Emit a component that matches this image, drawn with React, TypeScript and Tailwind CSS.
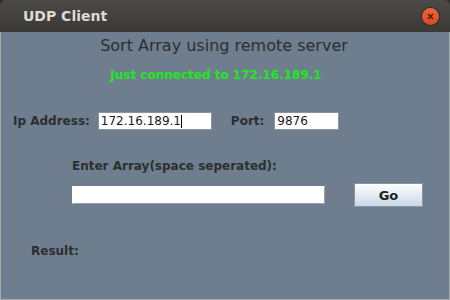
export default function App() {
  const sans = { fontFamily: '"DejaVu Sans", sans-serif' };
  return (
    <div className="w-[450px] h-[300px] bg-[#2f2e2b] overflow-hidden" style={sans}>
      <div className="flex flex-col w-full h-full">
        {/* title bar */}
        <div className="h-[32px] shrink-0 flex items-center justify-between rounded-t-[6px] bg-gradient-to-b from-[#4b4a46] to-[#3a3935] pl-[23px] pr-[11px]">
          <span className="text-[14px] font-bold text-[#dfdbd2] leading-none">UDP Client</span>
          <span className="w-[17px] h-[17px] rounded-full bg-gradient-to-b from-[#f0673a] to-[#d24a1f] flex items-center justify-center shadow-[0_0_0_1px_#2a2926]">
            <svg width="7" height="7" viewBox="0 0 7 7">
              <path d="M1 1 L6 6 M6 1 L1 6" stroke="#3b1a0e" strokeWidth="1.3" />
            </svg>
          </span>
        </div>

        {/* content */}
        <div className="flex-1 flex flex-col bg-[#6f7e8e] border-l border-r border-b border-[#a9acaf] text-[#2b2e31]">
          <div className="mt-[6px] h-[16px] flex justify-center items-center text-[16px] leading-none pr-[2px]">
            Sort Array using remote server
          </div>
          <div className="mt-[14px] h-[14px] flex justify-center items-center text-[12px] font-bold text-[#1ee81e] leading-none pr-[18px]">
            Just connected to 172.16.189.1
          </div>

          <div className="mt-[30px] h-[18px] flex items-center pl-[12px]">
            <span className="text-[12px] font-bold leading-none">Ip Address:</span>
            <div className="ml-[8px] w-[114px] h-[18px] bg-white border border-[#8d949b] flex items-center pl-[2px]">
              <span className="text-[12px] text-[#1a1a1a] leading-none">172.16.189.1</span>
              <span className="w-px h-[13px] bg-black" />
            </div>
            <span className="ml-[19px] text-[12px] font-bold leading-none">Port:</span>
            <div className="ml-[10px] w-[65px] h-[18px] bg-white border border-[#8d949b] flex items-center pl-[2px]">
              <span className="text-[12px] text-[#1a1a1a] leading-none">9876</span>
            </div>
          </div>

          <div className="mt-[29px] h-[14px] flex items-center pl-[71px] text-[12px] font-bold leading-none">
            Enter Array(space seperated):
          </div>

          <div className="mt-[10px] flex items-center pl-[71px]">
            <div className="w-[253px] h-[18px] bg-white border border-[#9aa0a6] border-t-white border-l-white" />
            <button className="ml-[29px] w-[69px] h-[24px] bg-gradient-to-b from-[#ffffff] to-[#c9d8e8] border border-[#8a95a2] text-[13px] font-bold text-[#222] leading-none">
              Go
            </button>
          </div>

          <div className="mt-[37px] h-[14px] flex items-center pl-[30px] text-[12px] font-bold leading-none">
            Result:
          </div>
        </div>
      </div>
    </div>
  );
}
